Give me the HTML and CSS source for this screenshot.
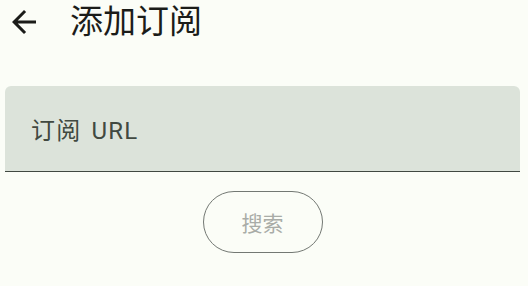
FILE: index.html
```html
<!DOCTYPE html>
<html lang="zh-CN">
<head>
<meta charset="utf-8">
<title>添加订阅</title>
<link rel="stylesheet" href="styles.css">
</head>
<body>
<header class="appbar">
  <span class="back">
    <svg viewBox="0 0 24 24" width="36" height="36"><path d="M20 11H7.83l5.59-5.59L12 4l-8 8 8 8 1.41-1.41L7.83 13H20v-2z" fill="#1b1c19"/></svg>
  </span>
  <h1 class="title">添加订阅</h1>
</header>
<main class="content">
  <div class="field"><span class="label">订阅 URL</span></div>
  <div class="actions"><button class="btn" disabled>搜索</button></div>
</main>
</body>
</html>
```
FILE: styles.css
```css
html, body {
  margin: 0;
  padding: 0;
  background: #fbfdf7;
  font-family: Roboto, "Noto Sans CJK SC", sans-serif;
}
.appbar {
  display: flex;
  align-items: center;
  height: 44px;
  padding-left: 6px;
}
.back {
  display: flex;
  width: 36px;
  height: 36px;
}
.title {
  margin: 0 0 0 28px;
  font-size: 33px;
  font-weight: 400;
  line-height: 44px;
  color: #1b1c19;
}
.content {
  padding: 42px 8px 0 5px;
}
.field {
  box-sizing: border-box;
  height: 86px;
  background: #dce3da;
  border-radius: 6px 6px 0 0;
  border-bottom: 1.5px solid #414941;
  display: flex;
  align-items: center;
  padding-left: 26px;
}
.label {
  font-size: 24px;
  letter-spacing: 1.2px;
  word-spacing: 3px;
  color: #414941;
}
.actions {
  display: flex;
  justify-content: center;
  padding-top: 19px;
}
.btn {
  box-sizing: border-box;
  width: 120px;
  height: 62px;
  border: 1.5px solid #737873;
  border-radius: 31px;
  background: transparent;
  font-family: Roboto, "Noto Sans CJK SC", sans-serif;
  font-size: 21px;
  color: #a9aca7;
  padding: 0;
}
```
